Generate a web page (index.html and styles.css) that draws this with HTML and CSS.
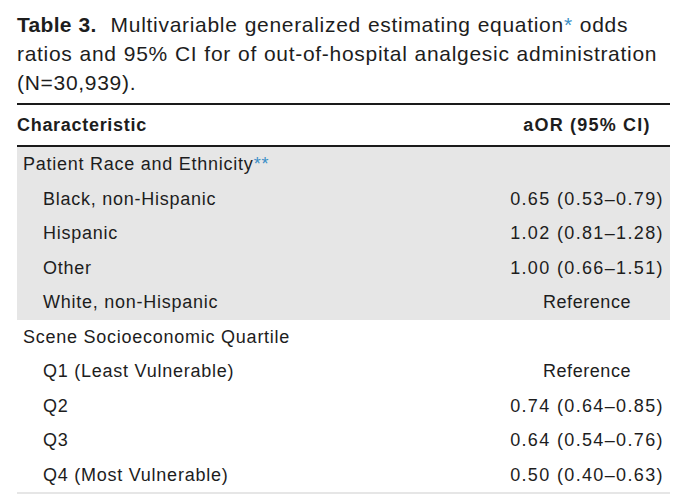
FILE: index.html
```html
<!DOCTYPE html>
<html lang="en">
<head>
<meta charset="utf-8">
<title>Table 3</title>
<link rel="stylesheet" href="styles.css">
</head>
<body>
<div class="page">
  <p class="caption"><span class="label">Table 3.</span>&nbsp; Multivariable generalized estimating equation<span class="ast">*</span> odds<br>ratios and 95% CI for of out-of-hospital analgesic administration<br>(N=30,939).</p>
  <table class="data">
    <thead>
      <tr><th class="c1">Characteristic</th><th class="c2">aOR (95% CI)</th></tr>
    </thead>
    <tbody class="grp shaded">
      <tr><td class="c1 head">Patient Race and Ethnicity<span class="ast">**</span></td><td class="c2"></td></tr>
      <tr><td class="c1 sub">Black, non-Hispanic</td><td class="c2 num">0.65 (0.53–0.79)</td></tr>
      <tr><td class="c1 sub">Hispanic</td><td class="c2 num">1.02 (0.81–1.28)</td></tr>
      <tr><td class="c1 sub">Other</td><td class="c2 num">1.00 (0.66–1.51)</td></tr>
      <tr><td class="c1 sub">White, non-Hispanic</td><td class="c2 ref">Reference</td></tr>
    </tbody>
    <tbody class="grp">
      <tr><td class="c1 head">Scene Socioeconomic Quartile</td><td class="c2"></td></tr>
      <tr><td class="c1 sub">Q1 (Least Vulnerable)</td><td class="c2 ref">Reference</td></tr>
      <tr><td class="c1 sub">Q2</td><td class="c2 num">0.74 (0.64–0.85)</td></tr>
      <tr><td class="c1 sub">Q3</td><td class="c2 num">0.64 (0.54–0.76)</td></tr>
      <tr><td class="c1 sub">Q4 (Most Vulnerable)</td><td class="c2 num">0.50 (0.40–0.63)</td></tr>
    </tbody>
  </table>
</div>
</body>
</html>
```

FILE: styles.css
```css
html, body {
  margin: 0;
  padding: 0;
  background: #ffffff;
}
body {
  font-family: "Liberation Sans", Arial, sans-serif;
  color: #1d1d1d;
  overflow: hidden;
  height: 494px;
}
.page {
  padding: 10px 10px 0 17px;
  width: 653px;
}
.caption {
  margin: 0;
  font-size: 21px;
  line-height: 29px;
  word-spacing: 0.5px;
  letter-spacing: 0.7px;
  white-space: nowrap;
}
.label {
  font-weight: bold;
  letter-spacing: 0.3px;
}
.ast {
  color: #3d8fc6;
}
.data {
  margin-top: 6px;
  width: 653px;
  border-collapse: collapse;
  border-top: 2px solid #1a1a1a;
  border-bottom: 2px solid #e6e6e6;
  font-size: 18px;
  letter-spacing: 0.75px;
}
.data th {
  font-weight: bold;
  line-height: 40px;
  padding: 0;
  border-bottom: 2px solid #1a1a1a;
  letter-spacing: 0.7px;
}
.data th.c2 {
  letter-spacing: 1.2px;
}
.data td {
  line-height: 34.5px;
  padding: 0;
  white-space: nowrap;
}
.c1 {
  text-align: left;
}
.c2 {
  width: 166px;
  text-align: center;
}
.data td.num {
  letter-spacing: 1.35px;
}
.data td.ref {
  letter-spacing: 0.55px;
}
.head {
  padding-left: 6px !important;
}
.sub {
  padding-left: 26px !important;
}
.shaded td {
  background: #e6e6e6;
}
```
